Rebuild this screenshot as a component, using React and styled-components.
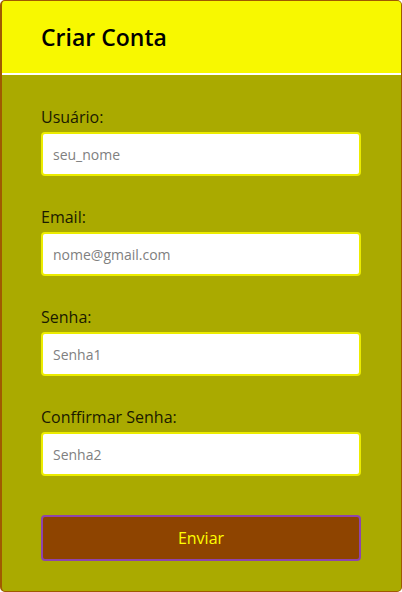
import styled, { createGlobalStyle } from "styled-components";

const GlobalStyle = createGlobalStyle`
  * { box-sizing: border-box; }
  html, body { margin: 0; padding: 0; background: #ffffff; }
  body { font-family: "Open Sans", "Noto Sans", sans-serif; }
`;

const fields = [
  { id: "usuario", label: "Usuário:", placeholder: "seu_nome" },
  { id: "email", label: "Email:", placeholder: "nome@gmail.com" },
  { id: "senha", label: "Senha:", placeholder: "Senha1" },
  { id: "senha2", label: "Conffirmar Senha:", placeholder: "Senha2" },
];

const App = () => {
  return (
    <>
      <GlobalStyle />
      <S.Card>
        <S.Header>
          <S.Title>Criar Conta</S.Title>
        </S.Header>
        <S.Form onSubmit={(e) => e.preventDefault()}>
          {fields.map((f) => (
            <S.Field key={f.id}>
              <S.Label htmlFor={f.id}>{f.label}</S.Label>
              <S.Input id={f.id} type="text" placeholder={f.placeholder} />
            </S.Field>
          ))}
          <S.Button type="submit">Enviar</S.Button>
        </S.Form>
      </S.Card>
    </>
  );
};

export default App;

const Card = styled.div`
  width: 402px;
  height: 592px;
  background-color: #aaaa00;
  border: 1px solid #a05a00;
  border-left-width: 2px;
  border-radius: 5px;
  overflow: hidden;
  display: flex;
  flex-direction: column;
`;

const Header = styled.div`
  height: 74px;
  flex-shrink: 0;
  background-color: #f8f800;
  border-bottom: 2px solid #ffffff;
  padding-left: 39px;
  display: flex;
  align-items: center;
`;

const Title = styled.h1`
  margin: 0;
  font-size: 23px;
  font-weight: 600;
  color: #000000;
`;

const Form = styled.form`
  padding: 32px 39px 0;
  display: flex;
  flex-direction: column;
  gap: 31px;
`;

const Field = styled.div`
  display: flex;
  flex-direction: column;
  gap: 5px;
`;

const Label = styled.label`
  display: block;
  height: 20px;
  font-size: 16px;
  line-height: 20px;
  color: #1a1a00;
`;

const Input = styled.input`
  display: block;
  width: 320px;
  height: 44px;
  margin: 0;
  border: 2px solid #ecec00;
  border-radius: 4px;
  background: #ffffff;
  padding: 0 10px;
  font-family: "Open Sans", "Noto Sans", sans-serif;
  font-size: 14px;
  outline: none;
  &::placeholder {
    color: #808080;
  }
`;

const Button = styled.button`
  width: 320px;
  height: 46px;
  margin-top: 8px;
  background-color: #8e4400;
  border: 2px solid #8e44ad;
  border-radius: 4px;
  color: #ffff00;
  font-family: "Open Sans", "Noto Sans", sans-serif;
  font-size: 16px;
  cursor: pointer;
`;

const S = {
  Card,
  Header,
  Title,
  Form,
  Field,
  Label,
  Input,
  Button,
};
